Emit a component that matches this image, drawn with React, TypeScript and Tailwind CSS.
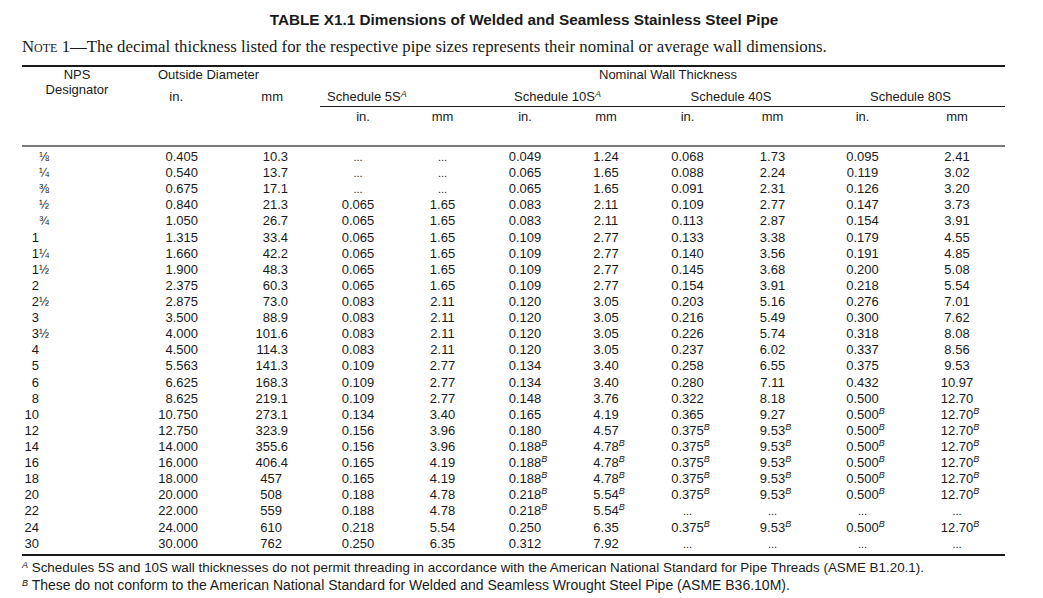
const rows: string[][] = [
	["⅛", "0.405", "10.3", "...", "...", "0.049", "1.24", "0.068", "1.73", "0.095", "2.41"],
	["¼", "0.540", "13.7", "...", "...", "0.065", "1.65", "0.088", "2.24", "0.119", "3.02"],
	["⅜", "0.675", "17.1", "...", "...", "0.065", "1.65", "0.091", "2.31", "0.126", "3.20"],
	["½", "0.840", "21.3", "0.065", "1.65", "0.083", "2.11", "0.109", "2.77", "0.147", "3.73"],
	["¾", "1.050", "26.7", "0.065", "1.65", "0.083", "2.11", "0.113", "2.87", "0.154", "3.91"],
	["1", "1.315", "33.4", "0.065", "1.65", "0.109", "2.77", "0.133", "3.38", "0.179", "4.55"],
	["1¼", "1.660", "42.2", "0.065", "1.65", "0.109", "2.77", "0.140", "3.56", "0.191", "4.85"],
	["1½", "1.900", "48.3", "0.065", "1.65", "0.109", "2.77", "0.145", "3.68", "0.200", "5.08"],
	["2", "2.375", "60.3", "0.065", "1.65", "0.109", "2.77", "0.154", "3.91", "0.218", "5.54"],
	["2½", "2.875", "73.0", "0.083", "2.11", "0.120", "3.05", "0.203", "5.16", "0.276", "7.01"],
	["3", "3.500", "88.9", "0.083", "2.11", "0.120", "3.05", "0.216", "5.49", "0.300", "7.62"],
	["3½", "4.000", "101.6", "0.083", "2.11", "0.120", "3.05", "0.226", "5.74", "0.318", "8.08"],
	["4", "4.500", "114.3", "0.083", "2.11", "0.120", "3.05", "0.237", "6.02", "0.337", "8.56"],
	["5", "5.563", "141.3", "0.109", "2.77", "0.134", "3.40", "0.258", "6.55", "0.375", "9.53"],
	["6", "6.625", "168.3", "0.109", "2.77", "0.134", "3.40", "0.280", "7.11", "0.432", "10.97"],
	["8", "8.625", "219.1", "0.109", "2.77", "0.148", "3.76", "0.322", "8.18", "0.500", "12.70"],
	["10", "10.750", "273.1", "0.134", "3.40", "0.165", "4.19", "0.365", "9.27", "0.500B", "12.70B"],
	["12", "12.750", "323.9", "0.156", "3.96", "0.180", "4.57", "0.375B", "9.53B", "0.500B", "12.70B"],
	["14", "14.000", "355.6", "0.156", "3.96", "0.188B", "4.78B", "0.375B", "9.53B", "0.500B", "12.70B"],
	["16", "16.000", "406.4", "0.165", "4.19", "0.188B", "4.78B", "0.375B", "9.53B", "0.500B", "12.70B"],
	["18", "18.000", "457", "0.165", "4.19", "0.188B", "4.78B", "0.375B", "9.53B", "0.500B", "12.70B"],
	["20", "20.000", "508", "0.188", "4.78", "0.218B", "5.54B", "0.375B", "9.53B", "0.500B", "12.70B"],
	["22", "22.000", "559", "0.188", "4.78", "0.218B", "5.54B", "...", "...", "...", "..."],
	["24", "24.000", "610", "0.218", "5.54", "0.250", "6.35", "0.375B", "9.53B", "0.500B", "12.70B"],
	["30", "30.000", "762", "0.250", "6.35", "0.312", "7.92", "...", "...", "...", "..."],
];

const cols = "grid grid-cols-[110px_73px_110px_86px_83px_82px_80px_83px_87px_93px_96px]";

function Nps({ v }: { v: string }) {
	const m = v.match(/^(\d*)(.*)$/)!;
	return (
		<div className="flex">
			<span className="inline-block w-[17px] text-right">{m[1]}</span>
			<span className="text-[12px]">{m[2]}</span>
		</div>
	);
}

function Num({ v }: { v: string }) {
	if (v.endsWith("B")) {
		return (
			<span className="relative">
				{v.slice(0, -1)}
				<span className="absolute left-full top-[-4px] text-[9px] italic">B</span>
			</span>
		);
	}
	if (v === "...") return <span className="text-[11px]">...</span>;
	return <span>{v}</span>;
}

function Sup({ c }: { c: string }) {
	return <span className="relative top-[-4px] text-[9px] italic">{c}</span>;
}

export default function App() {
	return (
		<div className="w-[1043px] h-[598px] bg-white text-[#1a1a1a] font-['Liberation_Sans',Arial,sans-serif] text-[13px]">
			<div className="ml-[22px] w-[983px]">
				<h1 className="pt-[10px] pl-[21px] h-[30px] leading-[20px] text-center text-[15.3px] font-bold">
					TABLE X1.1 Dimensions of Welded and Seamless Stainless Steel Pipe
				</h1>
				<p className="mt-[7px] leading-[20px] font-['Liberation_Serif',serif] text-[16.8px] whitespace-nowrap">
					<span className="[font-variant-caps:small-caps]">Note</span> 1—The decimal thickness listed for the respective pipe sizes represents their nominal or average wall dimensions.
				</p>

				<div className="mt-[8px] border-t-2 border-[#1a1a1a]" />

				<div className={`${cols} grid-rows-[16px_24px_38px] leading-[16px]`}>
					<div className="row-span-3 text-center leading-[15px]">
						NPS
						<br />
						Designator
					</div>
					<div className="col-span-2 pl-[26px]">Outside Diameter</div>
					<div className="col-span-8 pl-[16px] text-center">Nominal Wall Thickness</div>

					<div className="pt-[6px] text-right pr-[22px]">in.</div>
					<div className="pt-[6px] text-right pr-[32px]">mm</div>
					<div className="col-span-2 ml-[5px] pl-[7px] pt-[6px] border-b border-[#1a1a1a]">
						Schedule 5S<Sup c="A" />
					</div>
					<div className="col-span-2 pl-[30px] pt-[6px] border-b border-[#1a1a1a]">
						Schedule 10S<Sup c="A" />
					</div>
					<div className="col-span-2 pt-[6px] text-center border-b border-[#1a1a1a]">Schedule 40S</div>
					<div className="col-span-2 pt-[6px] text-center border-b border-[#1a1a1a]">Schedule 80S</div>

					<div />
					<div />
					<div className="pt-[2px] text-center pl-[10px]">in.</div>
					<div className="pt-[2px] text-center">mm</div>
					<div className="pt-[2px] text-center">in.</div>
					<div className="pt-[2px] text-center">mm</div>
					<div className="pt-[2px] text-center">in.</div>
					<div className="pt-[2px] text-center">mm</div>
					<div className="pt-[2px] text-center">in.</div>
					<div className="pt-[2px] text-center">mm</div>
				</div>

				<div className="border-t-2 border-[#7a7a7a]" />

				<div className="pt-[2px]">
					{rows.map((r) => (
						<div key={r[0]} className={`${cols} h-[16.12px] leading-[16.12px]`}>
							<Nps v={r[0]} />
							<div className="text-right pr-[7px]">{r[1]}</div>
							<div className={r[2].includes(".") ? "text-right pr-[27px]" : "text-right pr-[33px]"}>{r[2]}</div>
							{r.slice(3).map((v, i) => (
								<div key={i} className="text-center">
									<Num v={v} />
								</div>
							))}
						</div>
					))}
				</div>

				<div className="mt-[2px] border-t-2 border-[#1a1a1a]" />

				<div className="mt-[4px] leading-[16px] whitespace-nowrap">
					<p className="text-[13.4px]">
						<Sup c="A" /> Schedules 5S and 10S wall thicknesses do not permit threading in accordance with the American National Standard for Pipe Threads (ASME B1.20.1).
					</p>
					<p className="text-[14px]">
						<Sup c="B" /> These do not conform to the American National Standard for Welded and Seamless Wrought Steel Pipe (ASME B36.10M).
					</p>
				</div>
			</div>
		</div>
	);
}
